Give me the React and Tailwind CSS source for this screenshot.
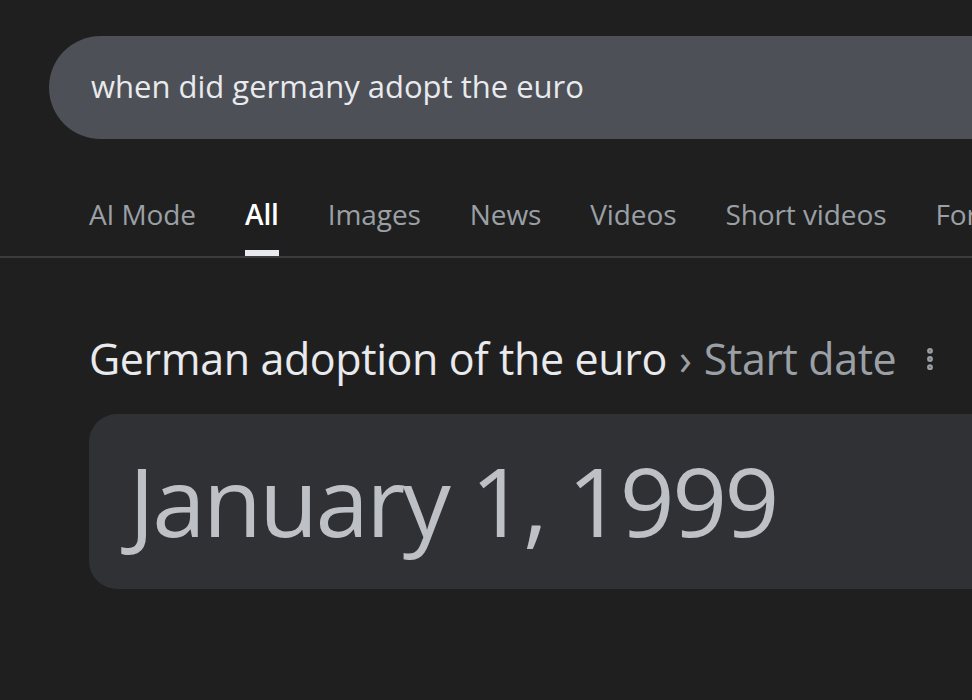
import { EllipsisVertical } from 'lucide-react';

const tabs = ['AI Mode', 'All', 'Images', 'News', 'Videos', 'Short videos', 'Forums'];

const App = () => {
  return (
    <div className="min-h-screen w-[972px] h-[700px] overflow-hidden bg-[#1f1f1f] font-['Open_Sans',sans-serif]">
      {/* search box */}
      <div className="pt-[36px] pl-[49px]">
        <div className="h-[103px] w-[1000px] rounded-l-full bg-[#4d5057] flex items-center pl-[42px]">
          <span className="text-[31px] font-medium text-[#e8eaed] -mt-[2px]">when did germany adopt the euro</span>
        </div>
      </div>

      {/* tabs */}
      <div className="mt-[50px] border-b-2 border-[#3c3c3c]">
        <div className="flex pl-[89px] gap-[49px] whitespace-nowrap">
          {tabs.map((t) => (
            <div key={t} className="flex flex-col items-center">
              <span className={`text-[28px] leading-[50px] font-medium tracking-[-0.1px] ${t === 'All' ? 'text-white font-semibold' : 'text-[#9aa0a6]'}`}>{t}</span>
              <div className={`h-[6px] w-full mt-[11px] ${t === 'All' ? 'bg-[#e8eaed]' : 'bg-transparent'}`} />
            </div>
          ))}
        </div>
      </div>

      {/* answer */}
      <div className="pl-[89px] pt-[69px]">
        <div className="flex items-center whitespace-nowrap">
          <span className="text-[43px] text-[#e8eaed] tracking-[-0.4px]">German adoption of the euro</span>
          <span className="text-[43px] text-[#9aa0a6] ml-[12px]">›</span>
          <span className="text-[43px] text-[#9aa0a6] ml-[12px] tracking-[-0.4px]">Start date</span>
          <EllipsisVertical size={28} className="text-[#9aa0a6] ml-[20px]" strokeWidth={3} />
        </div>
        <div className="mt-[22px] h-[175px] w-[1000px] rounded-l-[28px] bg-[#303134] flex items-center pl-[40px]">
          <span className="text-[96px] text-[#bdc1c6] leading-none tracking-[-2.6px] -mt-[2px]">January 1, 1999</span>
        </div>
      </div>
    </div>
  );
};

export default App;
